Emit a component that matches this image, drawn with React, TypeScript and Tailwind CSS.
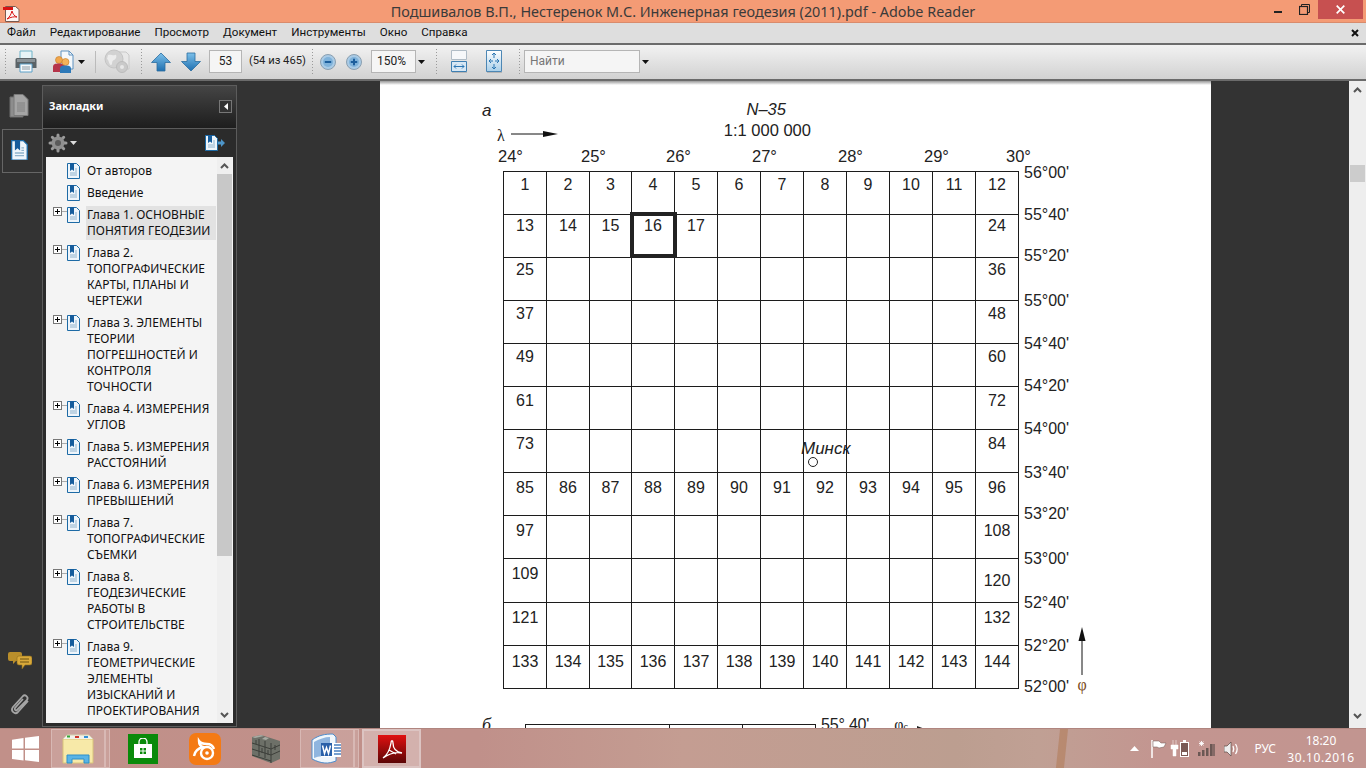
import React from "react";

const ui = { fontFamily: '"Noto Sans", "Open Sans", sans-serif' };
const rob = { fontFamily: 'Roboto, "Noto Sans", sans-serif' };
const arial = { fontFamily: '"Liberation Sans", Arial, sans-serif' };
const serif = { fontFamily: '"Liberation Serif", serif' };

const menu = ["Файл", "Редактирование", "Просмотр", "Документ", "Инструменты", "Окно", "Справка"];

const tree: { t: string[]; plus?: boolean; hl?: boolean }[] = [
  { t: ["От авторов"] },
  { t: ["Введение"] },
  { t: ["Глава 1. ОСНОВНЫЕ", "ПОНЯТИЯ ГЕОДЕЗИИ"], plus: true, hl: true },
  { t: ["Глава 2.", "ТОПОГРАФИЧЕСКИЕ", "КАРТЫ, ПЛАНЫ И", "ЧЕРТЕЖИ"], plus: true },
  { t: ["Глава 3. ЭЛЕМЕНТЫ", "ТЕОРИИ", "ПОГРЕШНОСТЕЙ И", "КОНТРОЛЯ", "ТОЧНОСТИ"], plus: true },
  { t: ["Глава 4. ИЗМЕРЕНИЯ", "УГЛОВ"], plus: true },
  { t: ["Глава 5. ИЗМЕРЕНИЯ", "РАССТОЯНИЙ"], plus: true },
  { t: ["Глава 6. ИЗМЕРЕНИЯ", "ПРЕВЫШЕНИЙ"], plus: true },
  { t: ["Глава 7.", "ТОПОГРАФИЧЕСКИЕ", "СЪЕМКИ"], plus: true },
  { t: ["Глава 8.", "ГЕОДЕЗИЧЕСКИЕ", "РАБОТЫ В", "СТРОИТЕЛЬСТВЕ"], plus: true },
  { t: ["Глава 9.", "ГЕОМЕТРИЧЕСКИЕ", "ЭЛЕМЕНТЫ", "ИЗЫСКАНИЙ И", "ПРОЕКТИРОВАНИЯ"], plus: true },
];

const rowPad = ["pt-[4px]", "pt-[2px]", "pt-[3px]", "pt-[4px]", "pt-[4px]", "pt-[5px]", "pt-[5px]", "pt-[6px]", "pt-[6px]", "pt-[6px]", "pt-[6px]", "pt-[7px]"];
const rowH = ["h-[43px]", "h-[43px]", "h-[43px]", "h-[43px]", "h-[43px]", "h-[43px]", "h-[43px]", "h-[43px]", "h-[43px]", "h-[44px]", "h-[43px]", "h-[43px]"];
const colW = ["w-[43px]", "w-[43px]", "w-[42px]", "w-[43px]", "w-[43px]", "w-[43px]", "w-[43px]", "w-[43px]", "w-[43px]", "w-[43px]", "w-[43px]", "w-[43px]"];
const fullRows = [0, 7, 11];

const lats: [string, string][] = [
  ["56°00'", "h-[42px]"], ["55°40'", "h-[41px]"], ["55°20'", "h-[45px]"], ["55°00'", "h-[43px]"],
  ["54°40'", "h-[42px]"], ["54°20'", "h-[43px]"], ["54°00'", "h-[44px]"], ["53°40'", "h-[41px]"],
  ["53°20'", "h-[45px]"], ["53°00'", "h-[44px]"], ["52°40'", "h-[43px]"], ["52°20'", "h-[41px]"], ["52°00'", "h-[18px]"],
];

const Grip = ({ cls = "" }: { cls?: string }) => (
  <div className={"w-[3px] h-[28px] shrink-0 " + cls} style={{ backgroundImage: "radial-gradient(#9a9a9a 0.7px, transparent 0.8px)", backgroundSize: "3px 3px" }} />
);

const Caret = ({ c = "#111" }: { c?: string }) => (
  <svg width="7" height="4" viewBox="0 0 7 4" className="shrink-0"><path d="M0 0h7L3.500 4z" fill={c} /></svg>
);

const BookDoc = ({ s = 1 }: { s?: number }) => (
  <svg width={13 * s} height={16 * s} viewBox="0 0 13 16" className="shrink-0">
    <path d="M.5.5h9l3 3v12H.5z" fill="#eef5fb" stroke="#1d6aa5" />
    <path d="M3 0h4v8L5 6.400 3 8z" fill="#155c9c" />
    <path d="M3 10h7M3 12h7M8 6h2M8 8h2" stroke="#8fb2cc" />
  </svg>
);

const Plus = () => (
  <div className="flex items-center shrink-0">
    <div className="w-[9px] h-[9px] border border-[#777] bg-white relative">
      <div className="absolute left-[1px] right-[1px] top-[3px] h-[1px] bg-black" />
      <div className="absolute top-[1px] bottom-[1px] left-[3px] w-[1px] bg-black" />
    </div>
    <div className="w-[5px] h-[1px] bg-[#aaa]" />
  </div>
);

const Chevron = ({ dir, c = "#555" }: { dir: "up" | "down"; c?: string }) => (
  <svg width="9" height="6" viewBox="0 0 9 6">
    <path d={dir === "up" ? "M1 5l3.500-3.500L8 5" : "M1 1l3.500 3.500L8 1"} fill="none" stroke={c} strokeWidth="2" />
  </svg>
);

const ArrowV = ({ up }: { up: boolean }) => (
  <svg width="20" height="20" viewBox="0 0 20 20" className="shrink-0">
    <defs>
      <linearGradient id={up ? "au" : "ad"} x1="0" y1="0" x2="0" y2="1">
        <stop offset="0" stopColor="#7cc0ea" />
        <stop offset="1" stopColor="#1f6fb0" />
      </linearGradient>
    </defs>
    <path d={up ? "M10 1l9.500 9.500H14V19H6v-8.500H.5z" : "M6 1h8v8.500h5.500L10 19 .5 9.500H6z"} fill={`url(#${up ? "au" : "ad"})`} stroke="#2c6d9f" strokeWidth=".8" />
  </svg>
);

const ZoomBtn = ({ plus }: { plus: boolean }) => (
  <svg width="16" height="16" viewBox="0 0 16 16" className="shrink-0">
    <circle cx="8" cy="8" r="7.500" fill="#a9cbe6" stroke="#8a9fb0" />
    <circle cx="8" cy="8" r="5" fill="#7fb2da" />
    <path d={plus ? "M4.800 7h2.200V4.800h2V7h2.200v2H9v2.200H7V9H4.800z" : "M4.800 7h6.400v2H4.800z"} fill="#1c5e9c" />
  </svg>
);

const Printer = () => (
  <svg width="22" height="23" viewBox="0 0 22 23" className="shrink-0">
    <path d="M5 1h12v8H5z" fill="#e6f3f6" stroke="#6fb3c8" />
    <path d="M2 8h18a1.500 1.500 0 0 1 1.500 1.500V18H.5V9.500A1.500 1.500 0 0 1 2 8z" fill="#5b6367" />
    <path d="M2 9h18v3H2z" fill="#8a9398" />
    <path d="M5 14h12v8H5z" fill="#f7f9fb" stroke="#5aa0c8" />
    <path d="M7 17h8M7 19h8" stroke="#8a9aa4" />
  </svg>
);

const Share = () => (
  <svg width="22" height="24" viewBox="0 0 22 24" className="shrink-0">
    <path d="M9 1h8l4 4v14H9z" fill="#f4f8fb" stroke="#5f92c0" />
    <path d="M17 1v4h4" fill="none" stroke="#5f92c0" />
    <circle cx="7" cy="10" r="3.500" fill="#f0a64c" stroke="#c47a23" strokeWidth=".6" />
    <path d="M1 22v-5c0-3 2-3.500 6-3.500s6 .5 6 3.500v5z" fill="#b5344a" />
    <circle cx="13.500" cy="12" r="3.500" fill="#f3b25a" stroke="#c47a23" strokeWidth=".6" />
    <path d="M8 23v-4c0-3 2-3.500 5.500-3.500S19 16 19 19v4z" fill="#2e79b8" />
  </svg>
);

const Globe = () => (
  <svg width="26" height="26" viewBox="0 0 26 26" className="shrink-0">
    <path d="M15 3h7l3 3v14H15z" fill="#e8e8e8" stroke="#c9c9c9" />
    <circle cx="10" cy="10" r="9" fill="#d2d2d2" stroke="#c4c4c4" />
    <path d="M4 6c3-1 5 1 7 0s2 4-1 5-1 5-3 5-2-5-4-6z" fill="#ececec" />
    <circle cx="18" cy="18" r="5.500" fill="#cacaca" stroke="#bcbcbc" />
    <circle cx="18" cy="18" r="2" fill="#e8e8e8" />
  </svg>
);

const FitWidth = () => (
  <svg width="17" height="23" viewBox="0 0 17 23" className="shrink-0">
    <path d="M.5.5h15v9H.5z" fill="#f6f8fa" stroke="#b0bcc6" />
    <path d="M.5 11.500h15v10H.5z" fill="#d7e7f4" stroke="#3e7fb2" />
    <path d="M3 16.500h10M3 16.500l2-2M3 16.500l2 2M13 16.500l-2-2M13 16.500l-2 2" stroke="#2b76b3" fill="none" />
    <path d="M1 22.500h15" stroke="#b5b5b5" />
  </svg>
);

const FitPage = () => (
  <svg width="17" height="23" viewBox="0 0 17 23" className="shrink-0">
    <defs>
      <linearGradient id="fp" x1="0" y1="0" x2="0" y2="1">
        <stop offset="0" stopColor="#ffffff" />
        <stop offset="1" stopColor="#a9cfe9" />
      </linearGradient>
    </defs>
    <path d="M.5.5h15v21H.5z" fill="url(#fp)" stroke="#4d87b4" />
    <path d="M8 3v5M8 3L6 5M8 3l2 2M8 14v5M8 19l-2-2M8 19l2-2M3 11h4M3 11l2-2M3 11l2 2M9 11h4M13 11l-2-2M13 11l-2 2" stroke="#2b76b3" fill="none" />
    <path d="M1 22.500h15" stroke="#b5b5b5" />
  </svg>
);

const PdfLogo = ({ w = 28 }: { w?: number }) => (
  <svg width={w} height={w} viewBox="0 0 28 28" className="shrink-0">
    <defs>
      <linearGradient id="pdf" x1="0" y1="0" x2="0" y2="1">
        <stop offset="0" stopColor="#e01010" />
        <stop offset="1" stopColor="#5c0505" />
      </linearGradient>
    </defs>
    <rect width="28" height="28" fill="url(#pdf)" />
    <path d="M5 23c4-3 7-9 8-15 0-3 2-3 2 0 0 5 3 9 9 10-5-1-12 0-19 5zM11 15l7 4" fill="none" stroke="#fff" strokeWidth="1.300" />
  </svg>
);

const TitleIcon = () => (
  <svg width="18" height="19" viewBox="0 0 18 19" className="shrink-0">
    <path d="M3.500 3.500h10l3.500 3v12h-13.500z" fill="#fdf6f3" stroke="#7a5a50" />
    <rect x="1" y="4" width="10" height="3" fill="#d81414" />
    <path d="M5 16c3-2 4-5 5-8 1 3 2 5 5 6-3-.5-6 0-10 2z" fill="none" stroke="#d81414" />
  </svg>
);

const Gear = () => (
  <svg width="20" height="20" viewBox="0 0 20 20">
    <g stroke="#9a9a9a" strokeWidth="3" strokeLinecap="round">
      <path d="M10 2v16M2 10h16M4.300 4.300l11.400 11.400M15.700 4.300L4.300 15.700" />
    </g>
    <circle cx="10" cy="10" r="6.500" fill="#8f8f8f" />
    <circle cx="10" cy="10" r="3" fill="#5a5a5a" />
  </svg>
);

const WinLogo = () => (
  <svg width="27" height="26" viewBox="0 0 27 26">
    <path d="M0 3.700L11.500 2v10.500H0zM13 1.800L27 0v12.500H13zM0 14h11.500v10.400L0 23zM13 14h14v12l-14-1.800z" fill="#fff" />
  </svg>
);

const Explorer = () => (
  <svg width="32" height="32" viewBox="0 0 32 32">
    <path d="M1 6h30v24H1z" fill="#f7e9a8" stroke="#d9c47a" />
    <path d="M1 6l4-4h22l4 4" fill="#f2f2ea" stroke="#d6d0b0" />
    <rect x="5" y="2.500" width="3" height="2" fill="#36a63a" />
    <rect x="13" y="3" width="4" height="2" fill="#d0352b" />
    <rect x="22" y="3" width="4" height="2" fill="#2e8fd6" />
    <path d="M5 22h22v8h-5v-4H10v4H5z" fill="#59b4e6" stroke="#2f8fc9" />
  </svg>
);

const Store = () => (
  <div className="w-[30px] h-[30px] bg-[#0a8a0a] flex items-center justify-center shrink-0">
    <svg width="22" height="22" viewBox="0 0 22 22">
      <path d="M7 6V4a4 4 0 0 1 8 0v2" fill="none" stroke="#fff" strokeWidth="1.300" />
      <path d="M2 6h18v14H2z" fill="#fff" />
      <path d="M8 10h2.500v2.500H8zM11.500 10H14v2.500h-2.500zM8 13.500h2.500V16H8zM11.500 13.500H14V16h-2.500z" fill="#0a8a0a" />
    </svg>
  </div>
);

const UC = () => (
  <div className="w-[32px] h-[32px] rounded-[7px] bg-[#f47a14] flex items-center justify-center shrink-0">
    <svg width="26" height="26" viewBox="0 0 26 26" fill="none" stroke="#fff" strokeWidth="2.400">
      <circle cx="15" cy="17" r="6" />
      <circle cx="15" cy="17" r="1.800" fill="#fff" stroke="none" />
      <path d="M2 20c1-6 5-8 9-9-3-1-4-3-4-6 2 3 5 3 8 3 3 0 6 2 7 5" />
    </svg>
  </div>
);

const Wall = () => (
  <svg width="30" height="30" viewBox="0 0 30 30">
    <path d="M1 3l9-2 19 6v18l-9 4-19-7z" fill="#6d7068" />
    <g stroke="#3d3f3a" strokeWidth="1" fill="none">
      <path d="M1 9l19 6 9-4M1 15l19 6 9-4M1 21l19 6M8 5v17M14 7v17M20 9v20M5 6v4M11 14v5M17 16v5M24 11v5" />
    </g>
    <path d="M1 3l9-2 3 1-9 2zM14 3l4 1-3 2-4-1z" fill="#a9aba3" />
  </svg>
);

const Word = () => (
  <svg width="32" height="32" viewBox="0 0 32 32">
    <path d="M1 7C8 2 14 1 22 1l3 3v24c-8 3-14 3-24-2z" fill="#f0f6fb" stroke="#4d8ccc" />
    <path d="M3 9c5-3 11-5 16-5v19c-6 0-11 0-16 2z" fill="#3f80c9" opacity=".55" />
    <path d="M10 10h20v14H10z" fill="#fff" />
    <path d="M10 10h11v13H10z" fill="#2a60a8" />
    <path d="M23 12h7M23 15h7M23 18h7M23 21h7" stroke="#4a80c0" strokeWidth="1.300" />
    <path d="M11.500 12.500l2 8 2-6 2 6 2-8" fill="none" stroke="#fff" strokeWidth="1.500" />
  </svg>
);

const TrayFlag = () => (
  <svg width="16" height="18" viewBox="0 0 16 18" className="shrink-0">
    <path d="M1 0v18" stroke="#fff" strokeWidth="1.500" />
    <path d="M2 1h6l2 2 5 0-2 4-5 1-2-1H2z" fill="#fff" stroke="#6d5450" strokeWidth=".5" />
  </svg>
);
const TrayPower = () => (
  <svg width="20" height="17" viewBox="0 0 20 17" className="shrink-0">
    <path d="M3 0v5M6 0v5M1 5h7v4H6v7H3V9H1z" fill="#fff" stroke="#fff" strokeWidth=".5" />
    <rect x="10.500" y="2.500" width="8" height="14" fill="#7a5a55" stroke="#fff" />
    <rect x="12" y="12" width="5" height="3" fill="#fff" />
    <rect x="13" y="0" width="3" height="2" fill="#fff" />
  </svg>
);
const TraySignal = () => (
  <svg width="17" height="15" viewBox="0 0 17 15" className="shrink-0">
    <path d="M0 15v-4h2.500v4zM4 15V9h2.500v6zM8 15V7h2.500v8zM12 15V3h2.500v12z" fill="#6b5854" />
    <path d="M14.500 15V3H17v12z" fill="#6b5854" opacity=".7" />
    <path d="M3.500 0v5M1 2.500h5M1.500.7l4 3.600M5.500.7l-4 3.600" stroke="#fff" strokeWidth=".9" />
  </svg>
);
const TrayVol = () => (
  <svg width="16" height="16" viewBox="0 0 16 16" className="shrink-0">
    <path d="M0 5h3l4-4v14l-4-4H0z" fill="#eee" stroke="#5a4744" strokeWidth=".7" />
    <path d="M9 5c1 2 1 4 0 6M11.500 3c2 3 2 7 0 10" fill="none" stroke="#fff" strokeWidth="1.300" />
  </svg>
);

const Pages = () => (
  <svg width="20" height="24" viewBox="0 0 20 24">
    <path d="M1 3h13v20H1z" fill="#8d8d8d" stroke="#6f6f6f" />
    <path d="M5 .5h9l5 5v16H5z" fill="#a5a5a5" stroke="#7a7a7a" />
    <path d="M8 9h8M8 11h8M8 13h8M8 15h8M8 17h8" stroke="#808080" />
  </svg>
);

const Comments = () => (
  <svg width="24" height="19" viewBox="0 0 24 19">
    <path d="M2 1h10a2 2 0 0 1 2 2v5a2 2 0 0 1-2 2H8l-3 3v-3H2a2 2 0 0 1-2-2V3a2 2 0 0 1 2-2z" fill="#b98e2b" />
    <path d="M11 5h11a2 2 0 0 1 2 2v5a2 2 0 0 1-2 2h-5l-3 4v-4h-3a2 2 0 0 1-2-2V7a2 2 0 0 1 2-2z" fill="#d9a93a" stroke="#8c6b1d" strokeWidth=".6" />
    <path d="M12 8h9M12 11h9" stroke="#6d5213" />
  </svg>
);

const Clip = () => (
  <svg width="22" height="24" viewBox="0 0 22 24">
    <path d="M19 8L9 19c-3 3-8-1-5-5L14 3c2-2 6 1 4 4L8 17c-1 1-3 0-2-2l8-9" fill="none" stroke="#a5a5a5" strokeWidth="1.800" />
  </svg>
);

export default function App() {
  return (
    <div className="w-[1366px] h-[768px] overflow-hidden flex flex-col bg-[#333]" style={ui}>
      {/* title bar */}
      <div className="h-[23px] bg-[#f49b75] border-b border-[#d98b6c] flex items-start shrink-0">
        <div className="w-[92px] shrink-0 pl-[2px] pt-[3px]"><TitleIcon /></div>
        <div className="flex-1 text-center text-[14.400px] leading-[23px] text-[#3a3a3a] whitespace-nowrap">
          Подшивалов В.П., Нестеренок М.С. Инженерная геодезия (2011).pdf - Adobe Reader
        </div>
        <div className="w-[92px] flex items-start shrink-0">
          <div className="w-[8px] h-[2px] bg-[#222] mt-[11px] mr-[17px]" />
          <svg width="11" height="11" viewBox="0 0 11 11" className="mt-[4px] mr-[8px]">
            <path d="M2.500 2.500V.5h8v8h-2" fill="none" stroke="#222" />
            <rect x=".5" y="2.500" width="8" height="8" fill="none" stroke="#222" strokeWidth="1.200" />
          </svg>
          <div className="w-[45px] h-[19px] bg-[#c75050] flex items-center justify-center">
            <svg width="9" height="9" viewBox="0 0 9 9"><path d="M.7.7l7.600 7.600M8.300.7L.7 8.300" stroke="#fff" strokeWidth="1.700" /></svg>
          </div>
        </div>
      </div>

      {/* menu */}
      <div className="h-[20px] bg-[#dedede] flex items-center shrink-0 pl-[7px] pr-[5px] text-[11.600px] text-[#111] gap-[14px]" style={rob}>
        {menu.map((m) => <span key={m}>{m}</span>)}
        <svg width="8" height="8" viewBox="0 0 8 8" className="ml-auto mr-[2px]"><path d="M1 1l6 6M7 1L1 7" stroke="#111" strokeWidth="2" /></svg>
      </div>

      {/* toolbar */}
      <div className="h-[38px] border-t-2 border-b-2 border-[#6b6b6b] bg-gradient-to-b from-[#f2f2f2] to-[#d2d2d2] flex items-center shrink-0 pl-[4px] pb-[1px] text-[12px] text-[#222]" style={rob}>
        <Grip />
        <div className="ml-[8px]"><Printer /></div>
        <div className="ml-[15px]"><Share /></div>
        <div className="ml-[4px]"><Caret /></div>
        <div className="w-[1px] h-[22px] bg-[#bbb] ml-[10px]" />
        <div className="ml-[8px]"><Globe /></div>
        <Grip cls="ml-[10px]" />
        <div className="ml-[8px]"><ArrowV up /></div>
        <div className="ml-[10px]"><ArrowV up={false} /></div>
        <div className="ml-[8px] w-[33px] h-[23px] border border-[#b5b5b5] bg-[#f5f5f5] text-center leading-[21px]">53</div>
        <span className="ml-[7px] w-[55px] whitespace-nowrap text-[11.200px]">(54 из 465)</span>
        <Grip cls="ml-[7px]" />
        <div className="ml-[6px]"><ZoomBtn plus={false} /></div>
        <div className="ml-[10px]"><ZoomBtn plus /></div>
        <div className="ml-[9px] w-[45px] h-[23px] border border-[#b5b5b5] bg-[#f5f5f5] pl-[5px] leading-[21px]">150%</div>
        <div className="ml-[2px]"><Caret /></div>
        <Grip cls="ml-[10px]" />
        <div className="ml-[13px]"><FitWidth /></div>
        <div className="ml-[18px]"><FitPage /></div>
        <Grip cls="ml-[15px]" />
        <div className="ml-[3px] w-[116px] h-[23px] border border-[#b5b5b5] bg-[#f5f5f5] pl-[5px] leading-[21px] text-[#777]">Найти</div>
        <div className="ml-[2px]"><Caret /></div>
      </div>

      {/* main */}
      <div className="flex-1 min-h-0 flex bg-[#333]">
        {/* rail + panel */}
        <div className="w-[380px] shrink-0 flex">
          <div className="w-[42px] shrink-0 flex flex-col items-stretch pt-[13px]">
            <div className="flex justify-center h-[34px] mr-[5px]"><Pages /></div>
            <div className="h-[44px] mt-[1px] ml-[2px] border-t border-l border-b border-[#666] flex items-center justify-center pb-[2px] pr-[6px]">
              <BookDoc s={1.3} />
            </div>
            <div className="mt-auto flex flex-col items-center pr-[3px] pb-[11px] gap-[23px]">
              <Comments />
              <Clip />
            </div>
          </div>
          <div className="w-[195px] shrink-0 pt-[4px] flex flex-col pb-[1px]">
            <div className="h-[43px] border-t border-l border-r border-[#5c5c5c] bg-gradient-to-b from-[#454545] to-[#1e1e1e] flex items-center justify-between pl-[6px] pr-[4px] pb-[2px]">
              <span className="text-[11px] font-bold text-white">Закладки</span>
              <div className="w-[13px] h-[13px] border border-[#777] bg-[#333] flex items-center justify-center">
                <svg width="4" height="7" viewBox="0 0 4 7"><path d="M4 0v7L0 3.500z" fill="#fff" /></svg>
              </div>
            </div>
            <div className="flex-1 min-h-0 border border-[#5c5c5c] bg-[#2b2b2b] flex flex-col px-[3px] pb-[3px]">
              <div className="h-[28px] flex items-center justify-between shrink-0 pl-[2px] pr-[8px]">
                <div className="flex items-center gap-[2px]"><Gear /><Caret c="#ddd" /></div>
                <div className="flex items-center">
                  <BookDoc />
                  <svg width="7" height="8" viewBox="0 0 7 8"><path d="M0 2.500h3V0l4 4-4 4V5.500H0z" fill="#4d94c8" /></svg>
                </div>
              </div>
              <div className="flex-1 min-h-0 flex overflow-hidden bg-[#f4f4f4] text-[12px] leading-[16px] text-[#111]">
                <div className="w-[171px] shrink-0 pt-[6px] flex flex-col gap-[6px] overflow-hidden">
                  {tree.map((it, i) => (
                    <div key={i} className="flex items-start">
                      <div className="w-[34px] shrink-0 flex justify-end items-start">
                        {it.plus && <Plus />}
                        <BookDoc />
                      </div>
                      <div className={it.hl ? "flex-1 whitespace-nowrap bg-[#e2e2e2] -my-[1px] py-[1px] ml-[6px] pl-[1px] mr-[1px]" : "flex-1 pl-[7px] whitespace-nowrap"}>
                        {it.t.map((l) => <div key={l}>{l}</div>)}
                      </div>
                    </div>
                  ))}
                </div>
                <div className="w-[15px] shrink-0 flex flex-col bg-[#efefef]">
                  <div className="h-[17px] flex items-center justify-center"><Chevron dir="up" /></div>
                  <div className="h-[382px] bg-[#c8c8c8]" />
                  <div className="mt-auto h-[17px] flex items-center justify-center"><Chevron dir="down" /></div>
                </div>
              </div>
            </div>
          </div>
        </div>

        {/* page */}
        <div className="w-[831px] shrink-0 bg-white overflow-hidden text-[#222]" style={arial}>
          <div className="h-[4px] bg-gradient-to-b from-[#9a9a9a] to-[#ffffff]" />
          <div className="flex pl-[102px] h-[18px] mt-[17px]">
            <span className="italic text-[17px] leading-[18px]">а</span>
            <span className="ml-[255px] italic text-[16.500px] leading-[18px] mt-[-2px]">N–35</span>
          </div>
          <div className="flex pl-[117px] h-[23px] mt-[1px] items-start">
            <span className="text-[16px] leading-[20px] mt-[5px]" style={serif}>λ</span>
            <svg width="48" height="8" viewBox="0 0 48 8" className="ml-[6px] mt-[9px]"><path d="M0 4h34" stroke="#111" strokeWidth="1" /><path d="M32 1l15 3-15 3z" fill="#111" /></svg>
            <span className="ml-[165px] text-[16.500px] leading-[20px] mt-[-1px]">1:1 000 000</span>
          </div>
          <div className="grid grid-cols-[83px_85px_86px_86px_86px_82px_30px] pl-[118px] text-[16.500px] leading-[17px] h-[27px] pt-[4px]">
            {["24°", "25°", "26°", "27°", "28°", "29°", "30°"].map((d) => <span key={d}>{d}</span>)}
          </div>

          <div className="flex pl-[123px] items-start h-[518px]">
            <div className="relative border-l border-t border-[#1c1c1c] shrink-0">
              {rowH.map((h, r) => (
                <div key={r} className={"flex " + h}>
                  {colW.map((w, c) => {
                    const n = r * 12 + c + 1;
                    let show = c === 0 || c === 11 || fullRows.includes(r);
                    if (r === 1 && c < 5) show = true;
                    const extra = n === 120 ? "pt-[13px]" : rowPad[r];
                    return (
                      <div key={c} className={w + " shrink-0 border-r border-b border-[#1c1c1c] text-center text-[16px] leading-[18px] " + extra}>
                        {show ? n : ""}
                      </div>
                    );
                  })}
                </div>
              ))}
              <span className="absolute left-[126px] top-[40px] w-[47px] h-[46px] border-4 border-[#222]" />
              <span className="absolute left-[297px] top-[268px] italic text-[17px] leading-[18px]">Минск</span>
              <span className="absolute left-[304px] top-[285px] w-[10px] h-[10px] rounded-full border border-[#222] bg-white" />
            </div>
            <div className="ml-[5px] mt-[-7px] flex flex-col text-[16px] leading-[18px] shrink-0">
              {lats.map(([l, h]) => <div key={l} className={h}>{l}</div>)}
            </div>
            <div className="ml-[6px] mt-[456px] flex flex-col items-center shrink-0 w-[14px]">
              <svg width="10" height="48" viewBox="0 0 10 48"><path d="M5 10v38" stroke="#111" /><path d="M5 0l3.500 14h-7z" fill="#111" /></svg>
              <span className="text-[16px] leading-[18px] mt-[1px] text-[#7a4a20]" style={serif}>φ</span>
            </div>
          </div>

          <div className="flex pl-[102px] mt-[26px] items-start">
            <span className="italic text-[18px] leading-[20px]" style={serif}>б</span>
            <div className="ml-[34px] mt-[9px] flex w-[291px] h-[20px] border-l border-t border-r border-[#1c1c1c] shrink-0">
              <div className="w-[144px] border-r border-[#1c1c1c]" />
              <div className="w-[73px] border-r border-[#1c1c1c]" />
            </div>
            <span className="ml-[5px] mt-[1px] text-[16px] leading-[18px] tracking-[-0.2px]">55° 40'</span>
            <span className="ml-[25px] mt-[1px] text-[16px] leading-[18px]" style={serif}>φ<span className="text-[10px]">с</span></span>
            <svg width="8" height="6" viewBox="0 0 8 6" className="ml-[9px] mt-[11px]"><path d="M0 0l8 3-8 3z" fill="#222" /></svg>
          </div>
        </div>

        {/* right */}
        <div className="flex-1" />
        <div className="w-[17px] shrink-0 bg-[#eeeeee] flex flex-col items-center">
          <div className="h-[17px] flex items-center justify-center"><Chevron dir="up" /></div>
          <div className="mt-[67px] h-[17px] w-[15px] bg-[#cccccc]" />
          <div className="mt-auto h-[15px]"><Chevron dir="down" /></div>
        </div>
      </div>

      {/* taskbar */}
      <div className="h-[40px] shrink-0 border-t border-[#b0857f] flex items-center text-white relative bg-[linear-gradient(90deg,#c19089_0%,#c0908a_35%,#c49d92_50%,#bc9e90_70%,#c0a094_76%,#c39590_85%,#c29590_100%)]">
        <div className="absolute left-[1058px] top-0 bottom-0 w-[8px] bg-[#b58468] -skew-x-6 opacity-80" />
        <div className="w-[51px] pl-[12px] shrink-0"><WinLogo /></div>
        <div className="w-[54px] h-[39px] border border-[#d8b8b4] bg-white/15 flex items-center justify-center shrink-0"><Explorer /></div>
        <div className="w-[5px] h-[39px] border border-[#d8b8b4] bg-white/15 shrink-0" />
        <div className="ml-[18px] shrink-0"><Store /></div>
        <div className="ml-[31px] shrink-0"><UC /></div>
        <div className="ml-[30px] shrink-0"><Wall /></div>
        <div className="ml-[19px] w-[54px] h-[39px] border border-[#d8b8b4] bg-white/15 flex items-center justify-center shrink-0"><Word /></div>
        <div className="w-[5px] h-[39px] border border-[#d8b8b4] bg-white/15 shrink-0" />
        <div className="ml-[3px] w-[59px] h-[39px] border-2 border-[#dcc4c2] bg-white/30 flex items-center justify-center shrink-0"><PdfLogo /></div>
        <div className="ml-auto flex items-center shrink-0 pr-[18px] relative">
          <svg width="9" height="5" viewBox="0 0 9 5" className="mr-[12px]"><path d="M4.500 0L9 5H0z" fill="#fff" /></svg>
          <div className="mr-[3px]"><TrayFlag /></div>
          <div className="mr-[8px]"><TrayPower /></div>
          <div className="mr-[9px]"><TraySignal /></div>
          <div className="mr-[14px]"><TrayVol /></div>
          <span className="text-[12px] mr-[18px]">РУС</span>
          <div className="w-[54px] flex flex-col items-center text-[12px] leading-[17px]">
            <span>18:20</span>
            <span className="whitespace-nowrap tracking-[0.6px]">30.10.2016</span>
          </div>
        </div>
      </div>
    </div>
  );
}
